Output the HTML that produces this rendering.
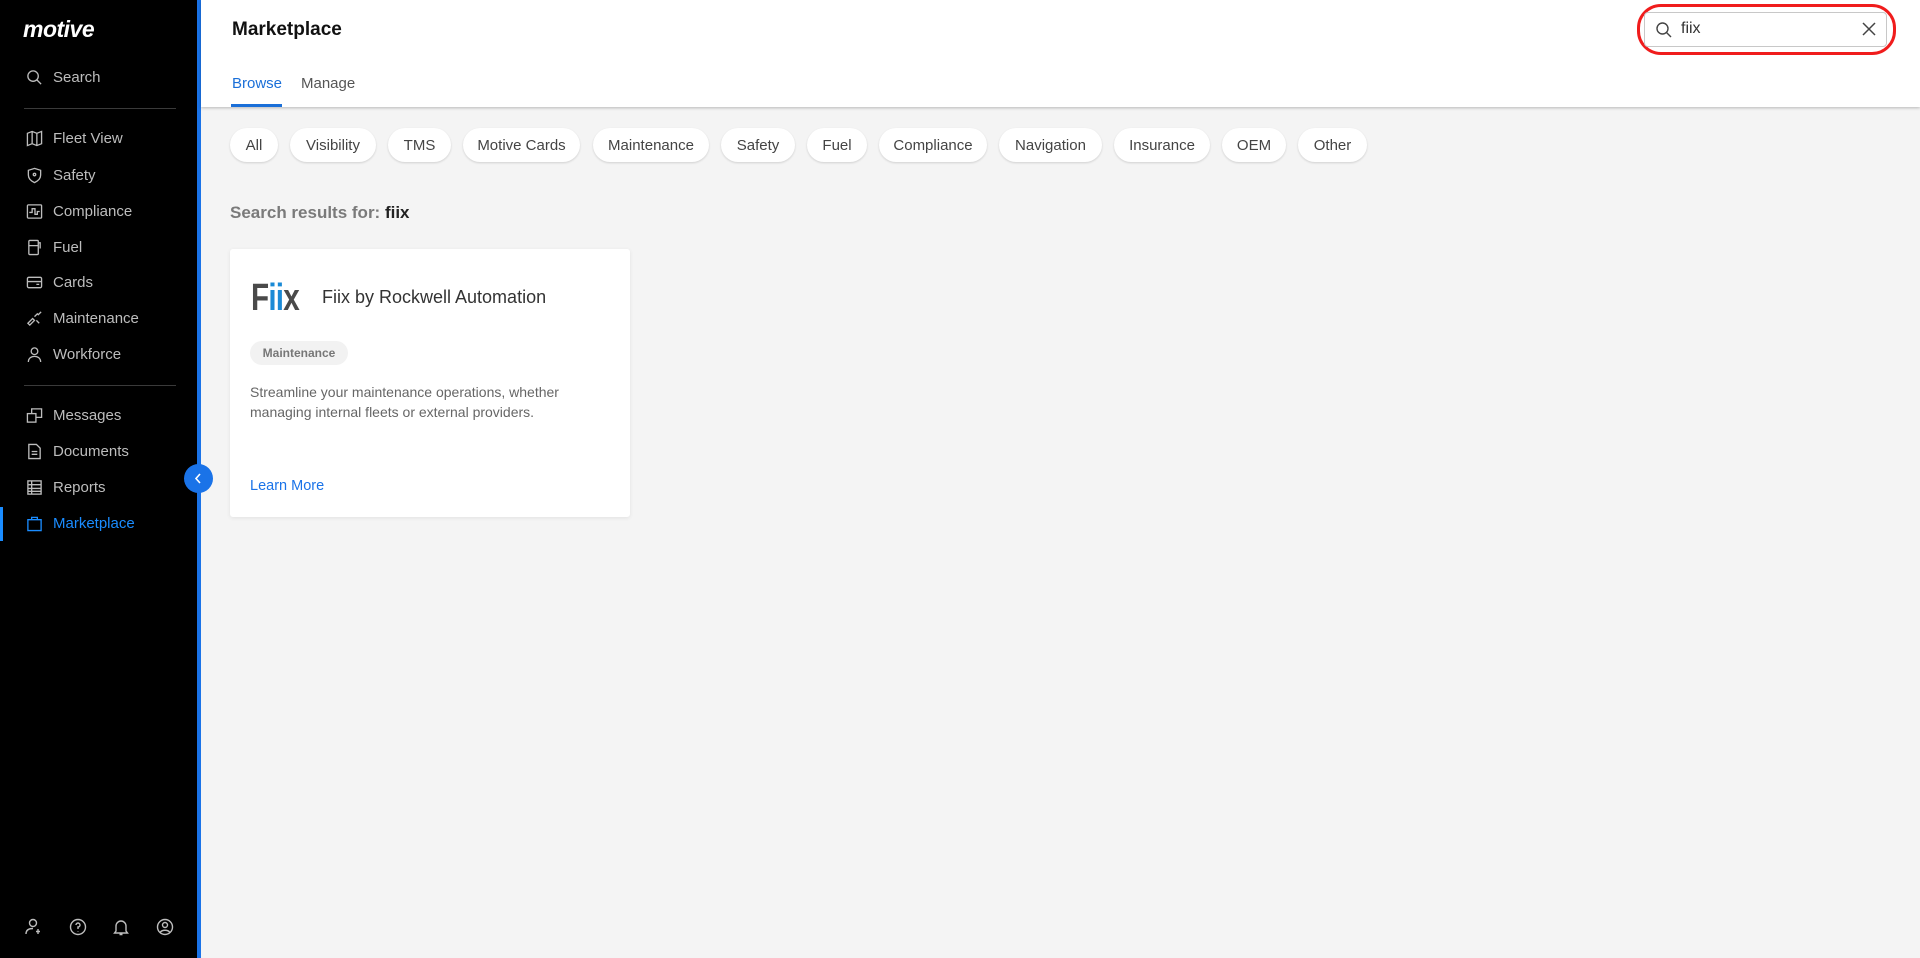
<!DOCTYPE html>
<html><head><meta charset="utf-8"><style>
*{box-sizing:border-box;margin:0;padding:0}
body{width:1920px;height:958px;overflow:hidden;font-family:"Liberation Sans",Arial,sans-serif;background:#f4f4f4;position:relative}
.sb{position:absolute;left:0;top:0;width:197px;height:958px;background:#000}
.sbb{position:absolute;left:197px;top:0;width:4px;height:958px;background:#1a73e8}
.logo{position:absolute;left:23px;top:16px;color:#fff;font-weight:bold;font-size:23px;letter-spacing:-0.5px;font-style:italic}
.it{position:absolute;left:26px;height:20px;display:flex;align-items:center;color:#bdbdbd;font-size:15px}
.it svg{width:17px;height:17px;margin-right:10px;fill:none;stroke:#bdbdbd;stroke-width:1.4}
.it.act{color:#1a8cff}.it.act svg{stroke:#1a8cff}
.dv{position:absolute;left:24px;width:152px;height:1px;background:#3a3a3a}
.hdr{position:absolute;left:201px;top:0;right:0;height:107px;background:#fff;box-shadow:0 1px 3px rgba(0,0,0,.25)}
.title{position:absolute;left:31px;top:19px;font-size:19px;font-weight:bold;color:#111}
.tab{position:absolute;top:75px;font-size:15px;color:#555}
.chip{position:absolute;top:128px;height:34px;border-radius:17px;background:#fff;box-shadow:0 1px 2px rgba(0,0,0,.15);font-size:15px;color:#444;display:flex;align-items:center;justify-content:center}
.card{position:absolute;left:230px;top:249px;width:400px;height:268px;background:#fff;border-radius:3px;box-shadow:0 1px 4px rgba(0,0,0,.08)}
</style></head><body>
<div class="sb">
<div class="logo">motive</div>
<div class="it" style="top:67px"><svg viewBox="0 0 18 18"><circle cx="7.5" cy="7.5" r="5.5"/><path d="M11.5 11.5l4.5 4.5"/></svg>Search</div>
<div class="dv" style="top:108px"></div>
<div class="it" style="top:128px"><svg viewBox="0 0 18 18"><path d="M1.5 3.5l5-2 5 2 5-2v13l-5 2-5-2-5 2zM6.5 1.5v13M11.5 3.5v13"/></svg>Fleet View</div>
<div class="it" style="top:165px"><svg viewBox="0 0 18 18"><path d="M9 1.5l6.5 2v5c0 4-3 6.5-6.5 8-3.5-1.5-6.5-4-6.5-8v-5z"/><circle cx="9" cy="8" r="1.3"/></svg>Safety</div>
<div class="it" style="top:201px"><svg viewBox="0 0 18 18"><rect x="1.5" y="2" width="15" height="14" rx="1"/><path d="M3.5 10h3V6h3v6h2.5V9h2.5"/></svg>Compliance</div>
<div class="it" style="top:237px"><svg viewBox="0 0 18 18"><rect x="3" y="1.5" width="10" height="15" rx="1"/><path d="M3 7h10M13 4h2v6"/></svg>Fuel</div>
<div class="it" style="top:272px"><svg viewBox="0 0 18 18"><rect x="1.5" y="3.5" width="15" height="11" rx="1.5"/><path d="M1.5 8h15M11 11h3"/></svg>Cards</div>
<div class="it" style="top:308px"><svg viewBox="0 0 18 18"><path d="M2 14l5-5 2 2-5 5zM9 7l3-3 1 1 3-3M11 11l3 3"/></svg>Maintenance</div>
<div class="it" style="top:344px"><svg viewBox="0 0 18 18"><circle cx="9" cy="5.5" r="3.5"/><path d="M2.5 17c0-4 3-6 6.5-6s6.5 2 6.5 6"/></svg>Workforce</div>
<div class="dv" style="top:385px"></div>
<div class="it" style="top:405px"><svg viewBox="0 0 18 18"><rect x="1.5" y="7" width="9" height="9"/><path d="M6 7V2h10.5v9H10.5"/></svg>Messages</div>
<div class="it" style="top:441px"><svg viewBox="0 0 18 18"><path d="M3 1.5h8l4 4v11H3zM6 9h6M6 12h6"/></svg>Documents</div>
<div class="it" style="top:477px"><svg viewBox="0 0 18 18"><rect x="2" y="2" width="14" height="14"/><path d="M2 6h14M2 10h14M2 13h14M6 2v14"/></svg>Reports</div>
<div style="position:absolute;left:0;top:507px;width:3px;height:34px;background:#1a8cff"></div>
<div class="it act" style="top:513px"><svg viewBox="0 0 18 18"><path d="M2 5h14v11.5H2zM6 5V2.5h6V5"/></svg>Marketplace</div>
<svg style="position:absolute;left:25px;top:918px" width="160" height="18" fill="none" stroke="#bdbdbd" stroke-width="1.4"><circle cx="8" cy="5" r="3.5"/><path d="M1 16c0-4 3-5.5 7-5.5M13 11v5M11 13.5h4"/><circle cx="53" cy="9" r="7.5"/><path d="M51 7a2 2 0 1 1 2 2v2M53 13v.5"/><path d="M91 13V8a5 5 0 0 1 10 0v5l1.5 2h-13zM94.5 16.5h3"/><circle cx="140" cy="9" r="7.5"/><circle cx="140" cy="7" r="2.5"/><path d="M135 14.5c2-3 8-3 10 0"/></svg>
</div>
<div class="sbb"></div>
<div style="position:absolute;left:184px;top:464px;width:29px;height:29px;border-radius:50%;background:#1a73e8"></div>
<svg style="position:absolute;left:192px;top:472px" width="13" height="13" fill="none" stroke="#fff" stroke-width="1.6"><path d="M8 2L4 6.5 8 11"/></svg>
<div class="hdr">
<div class="title">Marketplace</div>
<div class="tab" style="left:31px;color:#1a6fd8">Browse</div>
<div style="position:absolute;left:30px;top:104px;width:51px;height:3px;background:#1a6fd8"></div>
<div class="tab" style="left:100px">Manage</div>
</div>
<div style="position:absolute;left:1637px;top:4px;width:259px;height:51px;border:3px solid #f01c1c;border-radius:24px"></div>
<div style="position:absolute;left:1644px;top:12px;width:243px;height:35px;border:1px solid #c8c8c8;border-radius:4px;background:#fff"></div>
<svg style="position:absolute;left:1655px;top:21px" width="18" height="18" fill="none" stroke="#444" stroke-width="1.4"><circle cx="7.5" cy="7.5" r="5.5"/><path d="M11.5 11.5l4.5 4.5"/></svg>
<div style="position:absolute;left:1681px;top:20px;font-size:16px;color:#333">fiix</div>
<svg style="position:absolute;left:1862px;top:22px" width="14" height="14" stroke="#444" stroke-width="1.5"><path d="M1 1l12 12M13 1L1 13"/></svg>
<div class="chip" style="left:230px;width:48px">All</div>
<div class="chip" style="left:290px;width:86px">Visibility</div>
<div class="chip" style="left:388px;width:63px">TMS</div>
<div class="chip" style="left:463px;width:117px">Motive Cards</div>
<div class="chip" style="left:593px;width:116px">Maintenance</div>
<div class="chip" style="left:721px;width:74px">Safety</div>
<div class="chip" style="left:807px;width:60px">Fuel</div>
<div class="chip" style="left:879px;width:108px">Compliance</div>
<div class="chip" style="left:999px;width:103px">Navigation</div>
<div class="chip" style="left:1114px;width:96px">Insurance</div>
<div class="chip" style="left:1222px;width:64px">OEM</div>
<div class="chip" style="left:1298px;width:69px">Other</div>
<div style="position:absolute;left:230px;top:203px;font-size:17px;font-weight:bold;color:#7a7a7a">Search results for: <span style="color:#222">fiix</span></div>
<div class="card">
<div style="position:absolute;left:21px;top:30px;font-size:38px;font-weight:bold;color:#4a4a4a;letter-spacing:-1px;line-height:38px;transform:scaleX(0.78);transform-origin:left">F<span style="color:#1a8ad6">ii</span>x</div>
<div style="position:absolute;left:92px;top:38px;font-size:18px;color:#333">Fiix by Rockwell Automation</div>
<div style="position:absolute;left:20px;top:92px;width:98px;height:24px;border-radius:12px;background:#f2f2f2;font-size:12px;font-weight:bold;color:#777;display:flex;align-items:center;justify-content:center">Maintenance</div>
<div style="position:absolute;left:20px;top:133px;font-size:14px;line-height:20px;color:#666;width:370px">Streamline your maintenance operations, whether managing internal fleets or external providers.</div>
<div style="position:absolute;left:20px;top:229px;font-size:14.5px;color:#1a73e8">Learn More</div>
</div>
</body></html>
